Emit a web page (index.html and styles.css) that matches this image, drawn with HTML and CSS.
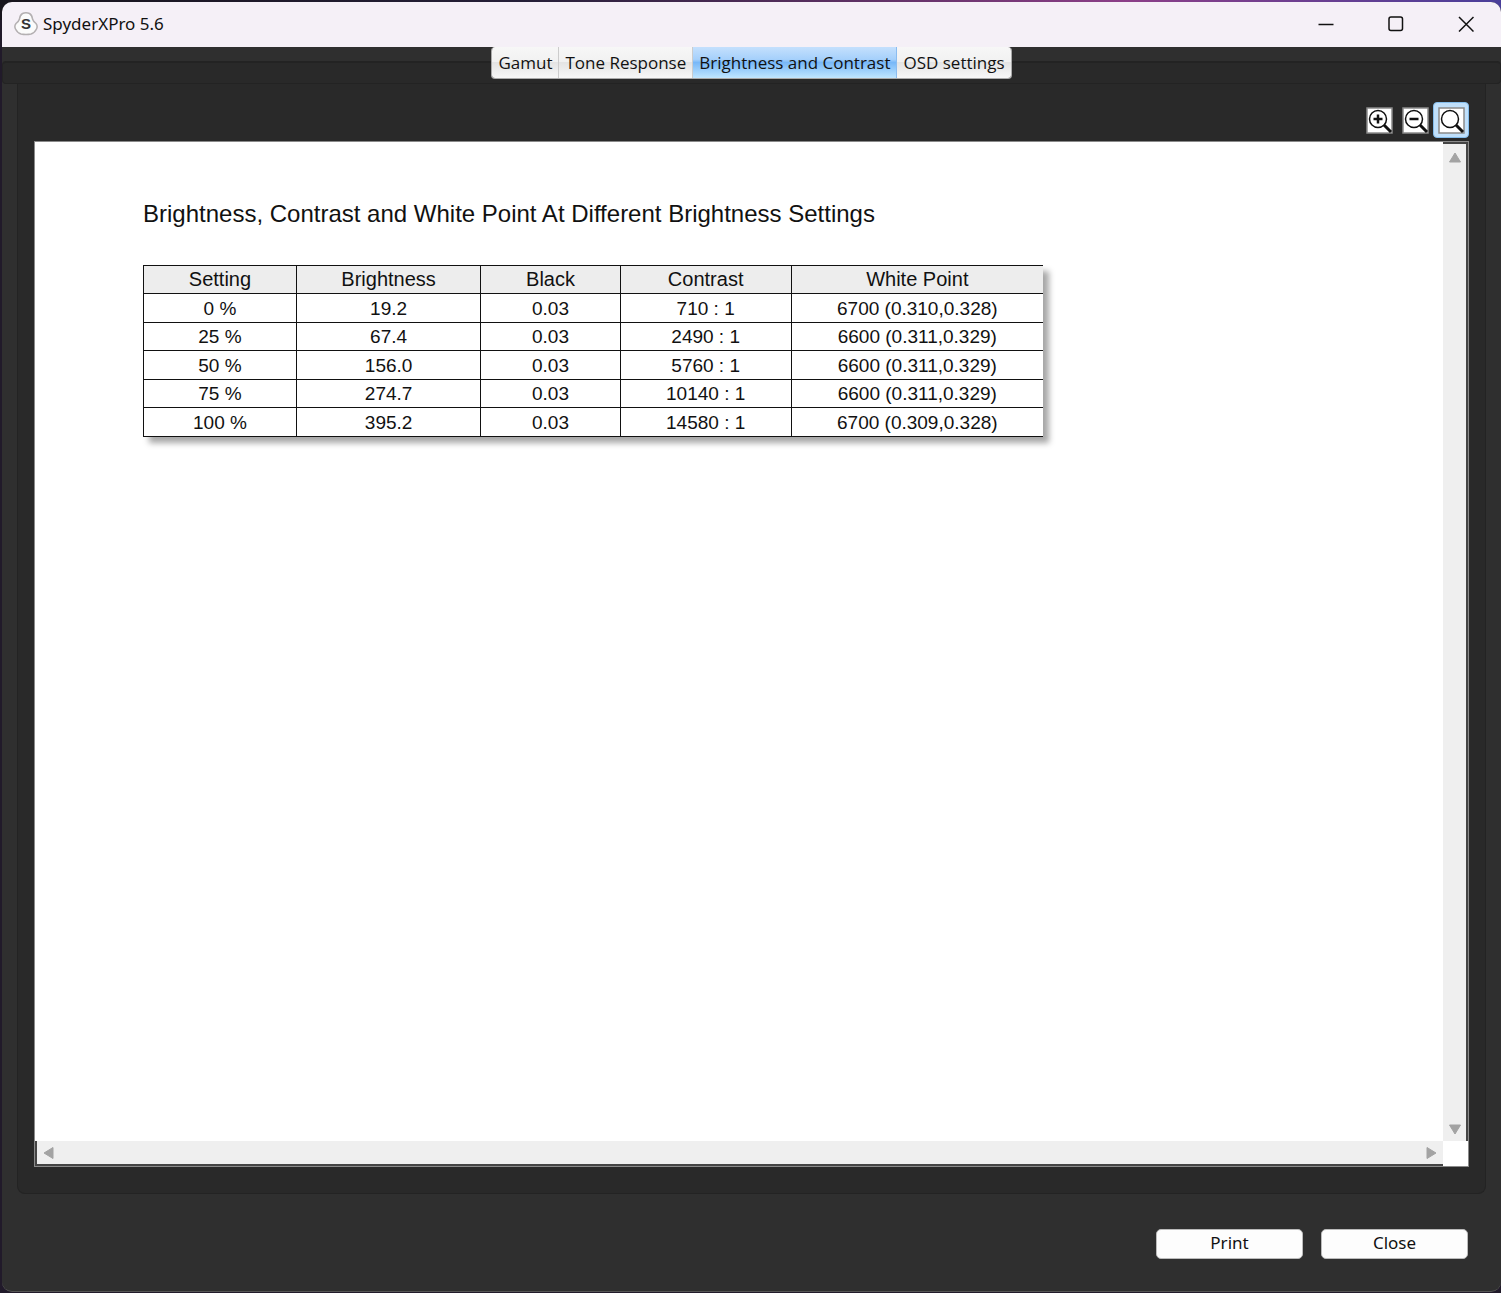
FILE: index.html
```html
<!DOCTYPE html>
<html lang="en">
<head>
    <meta charset="utf-8">
    <title>SpyderXPro 5.6</title>
    <link rel="stylesheet" href="styles.css">
</head>
<body>
    <div class="window">
        <!-- Title bar -->
        <header class="titlebar">
            <svg class="app-icon" width="24" height="24" viewBox="0 0 24 24">
                <path d="M8.500 1.500Q12 0 15.500 1.500Q18 3 18.500 7Q19 9 22 11.500Q24 14 22.500 17Q20.500 21 17 22Q12 23 7 22Q3.500 21 1.500 17Q0 14 2 11.500Q5 9 5.500 7Q6 3 8.500 1.500Z" fill="#fbfbfb" stroke="#b4b0b2" stroke-width="1.500"/>
                <text x="12" y="17" text-anchor="middle">S</text>
            </svg>
            <span class="app-title">SpyderXPro 5.6</span>
            <button class="win-btn" aria-label="Minimize">
                <svg width="16" height="16" viewBox="0 0 16 16"><path d="M.5 8.500H15.500"/></svg>
            </button>
            <button class="win-btn" aria-label="Maximize">
                <svg width="16" height="16" viewBox="0 0 16 16"><rect x="1" y="1" width="13.500" height="13.500" rx="2"/></svg>
            </button>
            <button class="win-btn" aria-label="Close window">
                <svg width="16" height="16" viewBox="0 0 16 16"><path d="M1 1L15.500 15.500M15.500 1L1 15.500"/></svg>
            </button>
        </header>

        <!-- Tabs -->
        <nav class="tabbar">
            <div class="band"></div>
            <div class="tabs" role="tablist">
                <button class="tab" role="tab">Gamut</button>
                <button class="tab" role="tab">Tone Response</button>
                <button class="tab active" role="tab" aria-selected="true">Brightness and Contrast</button>
                <button class="tab" role="tab">OSD settings</button>
            </div>
        </nav>

        <main class="panel">
            <div class="toolbar">
                <button class="tool" aria-label="Zoom in">
                    <svg width="27" height="27" viewBox="0 0 27 27">
                        <rect class="tile" x="1" y="1" width="25" height="25"/>
                        <circle cx="12" cy="12" r="8.500"/>
                        <path class="sign" d="M7.500 12H16.500M12 7.500V16.500"/>
                        <path class="handle" d="M18 18L25 25"/>
                    </svg>
                </button>
                <button class="tool" aria-label="Zoom out">
                    <svg width="27" height="27" viewBox="0 0 27 27">
                        <rect class="tile" x="1" y="1" width="25" height="25"/>
                        <circle cx="12" cy="12" r="8.500"/>
                        <path class="sign" d="M7.500 12H16.500"/>
                        <path class="handle" d="M18 18L25 25"/>
                    </svg>
                </button>
                <button class="tool selected" aria-label="Zoom to fit">
                    <svg width="27" height="27" viewBox="0 0 27 27">
                        <rect class="tile" x="1" y="1" width="25" height="25"/>
                        <circle cx="12" cy="12" r="8.500"/>
                        <path class="handle" d="M18 18L25 25"/>
                    </svg>
                </button>
            </div>

            <div class="viewer">
                <section class="page">
                    <h1>Brightness, Contrast and White Point At Different Brightness Settings</h1>
                    <table class="report">
                        <colgroup>
                            <col class="col-setting"><col class="col-brightness"><col class="col-black"><col class="col-contrast"><col class="col-white">
                        </colgroup>
                        <thead>
                            <tr><th>Setting</th><th>Brightness</th><th>Black</th><th>Contrast</th><th>White Point</th></tr>
                        </thead>
                        <tbody>
                            <tr><td>0 %</td><td>19.2</td><td>0.03</td><td>710 : 1</td><td>6700 (0.310,0.328)</td></tr>
                            <tr><td>25 %</td><td>67.4</td><td>0.03</td><td>2490 : 1</td><td>6600 (0.311,0.329)</td></tr>
                            <tr><td>50 %</td><td>156.0</td><td>0.03</td><td>5760 : 1</td><td>6600 (0.311,0.329)</td></tr>
                            <tr><td>75 %</td><td>274.7</td><td>0.03</td><td>10140 : 1</td><td>6600 (0.311,0.329)</td></tr>
                            <tr><td>100 %</td><td>395.2</td><td>0.03</td><td>14580 : 1</td><td>6700 (0.309,0.328)</td></tr>
                        </tbody>
                    </table>
                </section>
                <div class="scroll vertical">
                    <button class="arrow" aria-label="Scroll up"><svg width="14" height="12" viewBox="0 0 14 12"><path d="M7 1L12.500 10H1.500Z"/></svg></button>
                    <button class="arrow" aria-label="Scroll down"><svg width="14" height="12" viewBox="0 0 14 12"><path d="M7 11L12.500 2H1.500Z"/></svg></button>
                </div>
                <div class="scroll horizontal">
                    <button class="arrow" aria-label="Scroll left"><svg width="12" height="14" viewBox="0 0 12 14"><path d="M1 7L10 1.500V12.500Z"/></svg></button>
                    <button class="arrow" aria-label="Scroll right"><svg width="12" height="14" viewBox="0 0 12 14"><path d="M11 7L2 1.500V12.500Z"/></svg></button>
                </div>
            </div>
        </main>

        <footer class="actions">
            <button class="action">Print</button>
            <button class="action">Close</button>
        </footer>
    </div>
</body>
</html>
```
FILE: styles.css
```css
* { box-sizing: border-box; }
body {
    margin: 0;
    height: 100vh;
    padding: 2px 0 1px 2px;
    background: linear-gradient(90deg, #17141c 0%, #251f38 35%, #8c3f88 75%, #4a3f9a 100%) top / 100% 20px no-repeat #211a2a;
    font-family: "Noto Sans", sans-serif;
    color: #111;
}
button { margin: 0; padding: 0; border: 0; background: none; font: inherit; color: inherit; }
svg { display: block; }

.window {
    display: flex;
    flex-direction: column;
    height: 100%;
    background: #2f2f2f;
    border-bottom: 1px solid #555;
    border-radius: 10px;
    overflow: hidden;
}

.titlebar { display: flex; align-items: center; height: 45px; padding: 0 0 2px 12px; background: #f5f0f7; }
.app-icon text { font: bold 15px "Liberation Sans", sans-serif; fill: #333; }
.app-title { flex: 1; padding-left: 5px; font-size: 17px; }
.win-btn { display: grid; place-items: center; width: 70px; height: 43px; }
.win-btn svg { fill: none; stroke: #111; stroke-width: 1.5; }

/* the tabs hang over the band, so both share one grid cell */
.tabbar { display: grid; height: 37px; }
.band {
    grid-area: 1 / 1;
    align-self: end;
    height: 23px;
    background: #292929;
    border: 1px solid #232323;
    border-top-width: 2px;
    border-radius: 4px;
}
.tabs { grid-area: 1 / 1; place-self: start center; display: flex; z-index: 1; border: 1px solid #aaa; border-width: 0 1px 1px; border-radius: 4px; overflow: hidden; }
.tab {
    height: 31px;
    padding: 0 6px;
    font-family: "Open Sans", sans-serif;
    font-size: 17px;
    border-right: 1px solid #ccc;
    background: linear-gradient(#f7f7f7 0%, #f1f1f1 48%, #e4e4e4 50%, #f7f7f7 100%);
}
.tab:last-child { border-right: 0; }
.tab.active { background: linear-gradient(#c4e0fd 0%, #a5d0fb 40%, #78b8f8 50%, #c0e6ff 100%); border-right-color: #8bbcf0; }

.panel {
    flex: 1;
    display: flex;
    flex-direction: column;
    margin: 0 15px;
    padding: 18px 16px 26px;
    background: #292929;
    border: 1px solid #232323;
    border-top: 0;
    border-radius: 0 0 8px 8px;
}
.toolbar { display: flex; justify-content: flex-end; height: 39px; }
.tool { display: grid; place-items: center; width: 36px; height: 36px; border-radius: 4px; }
.tool.selected { background: #c0e0fb; border: 1px solid #84bdec; }
.tool svg { fill: none; stroke: #111; stroke-width: 1.5; }
.tool .tile { fill: #fff; stroke: #8a8a8a; }
.tool .sign { stroke-width: 2.5; }
.tool .handle { stroke-width: 3; }

.viewer {
    flex: 1;
    display: grid;
    grid-template-columns: 1fr 25px;
    grid-template-rows: 1fr 25px;
    background: #fff;
    border: 1px solid #8a8a8a;
}
.page { padding: 54px 0 0 108px; font-family: "Liberation Sans", sans-serif; }
.page h1 { margin: 0 0 34px; font-size: 24px; line-height: 35px; font-weight: normal; }
.report {
    width: 900px;
    table-layout: fixed;
    border-collapse: collapse;
    font-size: 19px;
    text-align: center;
    background: #fff;
    box-shadow: 6px 6px 6px rgba(0, 0, 0, .35);
}
.report tr { height: 28px; }
.report tbody tr:nth-child(odd) { height: 29px; }
.report th, .report td { padding: 0; line-height: 27px; border: 1px solid #111; }
.report th { font-size: 20px; font-weight: normal; background: #ededed; }
.report th:last-child, .report td:last-child { border-right: 0; }
.col-setting { width: 17%; }
.col-brightness { width: 20.5%; }
.col-black { width: 15.5%; }
.col-contrast { width: 19%; }
.col-white { width: 28%; }

.scroll { display: flex; justify-content: space-between; background: #efefef; }
.vertical { flex-direction: column; align-items: center; padding: 8px 0 6px; border-top: 2px solid #444; border-right: 2px solid #444; }
.horizontal { align-items: center; padding: 0 6px; border-left: 2px solid #444; border-bottom: 2px solid #444; }
.arrow svg { fill: #a3a3a3; stroke: #a3a3a3; stroke-linejoin: round; }

.actions { display: flex; justify-content: flex-end; gap: 18px; padding: 35px 33px 32px 0; }
.action { width: 147px; height: 30px; padding-bottom: 2px; font-size: 17px; line-height: 26px; background: #fdfdfd; border: 1px solid #bbb; border-radius: 5px; }
```
